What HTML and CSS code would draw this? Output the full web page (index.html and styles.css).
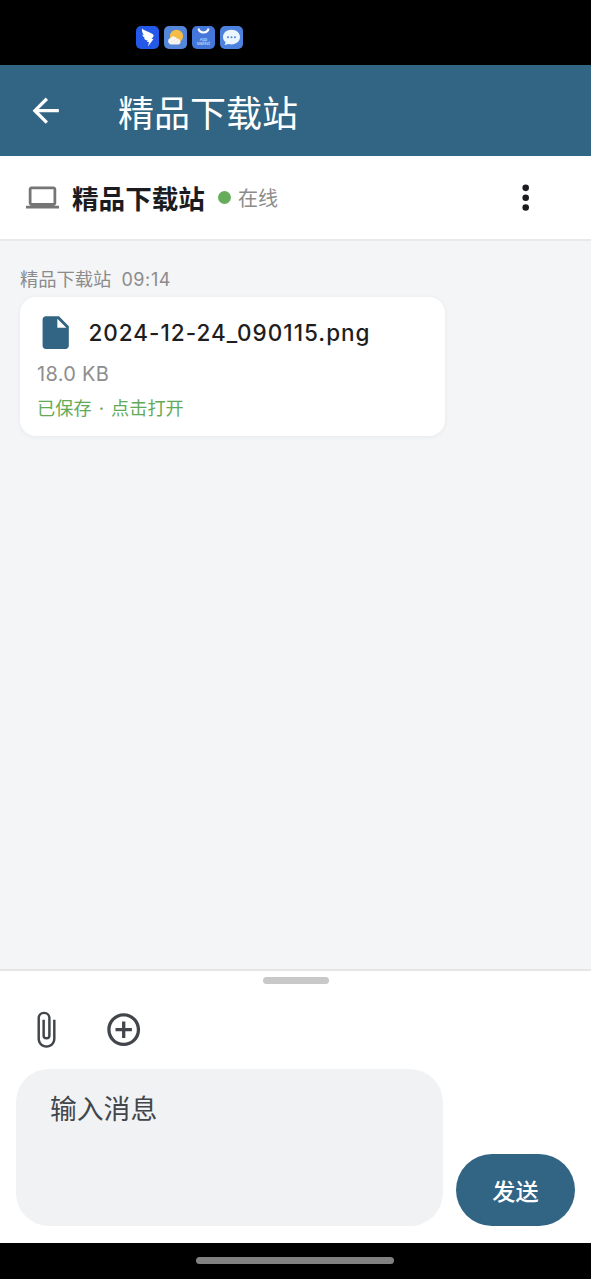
FILE: index.html
```html
<!DOCTYPE html>
<html lang="zh-CN">
<head>
<meta charset="utf-8">
<title>精品下载站</title>
<link rel="stylesheet" href="styles.css">
</head>
<body>
<div class="screen">
  <div class="status">
    <svg class="app" viewBox="0 0 23 23"><rect width="23" height="23" rx="5" fill="#2458e8"/><path d="M6 2.500c2 2 7 3.200 10.500 5.500 1.500 1.100 1.200 2.100.4 3.300l-1.400 1.700h2l-5.500 7.500 1-4.500h-2l.7-1.500c-2-.2-3.200-1-3.800-2.200h1.500C7.500 11.300 6.500 10 6.300 8.500l1.600.5C6.300 7 5.700 5 6 2.500z" fill="#fff"/></svg>
    <svg class="app" viewBox="0 0 23 23"><rect width="23" height="23" rx="5" fill="#5487d9"/><circle cx="12.500" cy="10.200" r="6.500" fill="#f5bd45"/><path d="M6.500 18.500a3.500 3.500 0 0 1-.2-6.600 4 4 0 0 1 6.800.8 3 3 0 0 1 1.400 5.800z" fill="#f5f3eb"/></svg>
    <svg class="app" viewBox="0 0 23 23"><rect width="23" height="23" rx="5" fill="#4577db"/><path d="M6.500 2.500c.8 5.200 9.200 5.200 10 0" fill="none" stroke="#fff" stroke-width="2"/><text class="app-text" x="11.500" y="14.500">App</text><text class="app-text" x="11.500" y="18.900">Market</text></svg>
    <svg class="app" viewBox="0 0 23 23"><rect width="23" height="23" rx="5" fill="#4c82de"/><path d="M11.500 3.800c5 0 8.500 3.100 8.500 7.300s-3.500 7.300-8.500 7.300c-1 0-2-.1-2.900-.4l-4.100 1 1.200-2.700C4 15 3 13.200 3 11.100c0-4.200 3.500-7.300 8.500-7.300z" fill="#eaf5ff"/><g fill="#4c82de"><circle cx="8" cy="11.200" r="1"/><circle cx="11.500" cy="11.200" r="1"/><circle cx="15" cy="11.200" r="1"/></g></svg>
  </div>
  <header class="toolbar">
    <svg class="icon" viewBox="0 0 24 24"><path d="M20 11H7.830l5.590-5.590L12 4l-8 8 8 8 1.410-1.410L7.830 13H20v-2z"/></svg>
    <h1 class="title">精品下载站</h1>
  </header>
  <section class="peer">
    <svg class="laptop" viewBox="0 0 24 24"><path d="M20 18c1.100 0 2-.9 2-2V6c0-1.100-.9-2-2-2H4c-1.100 0-2 .9-2 2v10c0 1.100.9 2 2 2H0v2h24v-2h-4zM4 6h16v10H4V6z"/></svg>
    <span class="peer-name">精品下载站</span>
    <i class="dot"></i>
    <span class="peer-state">在线</span>
    <svg class="icon more" viewBox="0 0 24 24"><circle cx="12" cy="6" r="2"/><circle cx="12" cy="12" r="2"/><circle cx="12" cy="18" r="2"/></svg>
  </section>
  <main class="chat">
    <div class="meta"><span>精品下载站</span><span class="time">09:14</span></div>
    <article class="card">
      <div class="file">
        <svg class="icon" viewBox="0 0 24 24"><path d="M6 2c-1.100 0-1.990.9-1.990 2L4 20c0 1.100.89 2 1.990 2H18c1.100 0 2-.9 2-2V8l-6-6H6zm7 7V3.500L18.500 9H13z"/></svg>
        <span class="file-name">2024-12-24_090115.png</span>
      </div>
      <div class="size">18.0 KB</div>
      <div class="saved">已保存 · 点击打开</div>
    </article>
  </main>
  <section class="composer">
    <div class="handle"></div>
    <div class="tools">
      <svg class="icon" viewBox="0 0 24 24"><path d="M16.500 6v11.500c0 2.210-1.790 4-4 4s-4-1.790-4-4V5a2.500 2.500 0 0 1 5 0v10.500c0 .55-.45 1-1 1s-1-.45-1-1V6H10v9.500a2.500 2.500 0 0 0 5 0V5c0-2.210-1.790-4-4-4S7 2.790 7 5v12.500c0 3.040 2.460 5.500 5.500 5.500s5.500-2.460 5.500-5.500V6h-1.500z"/></svg>
      <svg class="icon" viewBox="0 0 24 24"><path d="M13 7h-2v4H7v2h4v4h2v-4h4v-2h-4V7zm-1-5C6.480 2 2 6.480 2 12s4.480 10 10 10 10-4.480 10-10S17.520 2 12 2zm0 18c-4.410 0-8-3.590-8-8s3.590-8 8-8 8 3.590 8 8-3.590 8-8 8z"/></svg>
    </div>
    <div class="entry">
      <div class="input">输入消息</div>
      <div class="send">发送</div>
    </div>
  </section>
  <div class="nav"><div class="nav-pill"></div></div>
</div>
</body>
</html>
```
FILE: styles.css
```css
* { box-sizing: border-box; }
body { margin: 0; font-family: Inter, "Noto Sans CJK SC", sans-serif; }
.screen { width: 591px; height: 1279px; display: flex; flex-direction: column; overflow: hidden; background: #fff; }
.icon { width: 39.4px; height: 39.4px; flex: none; fill: currentColor; display: block; }

.status { height: 65px; background: #000; display: flex; gap: 5px; padding: 26px 0 0 136px; flex: none; }
.app { width: 23px; height: 23px; }
.app-text { font-size: 4px; fill: #dce9ff; text-anchor: middle; }

.toolbar { height: 91px; flex: none; background: #326484; color: #fff; display: flex; align-items: center; gap: 52.500px; padding-left: 26px; }
.title { margin: 6px 0 0; font-size: 36px; line-height: 48px; font-weight: 400; }

.peer { height: 85px; flex: none; border-bottom: 2px solid #e8e9eb; display: flex; align-items: center; padding: 0 46px 0 26px; color: #1b1c1f; }
.laptop { width: 33px; height: 33px; fill: #757575; margin-right: 13px; }
.peer-name { font-size: 26.600px; line-height: 36px; font-weight: 700; margin-top: 3px; }
.dot { width: 13px; height: 13px; border-radius: 50%; background: #66ad5b; margin: 0 7px 0 13px; }
.peer-state { font-size: 20px; color: #8b8b8b; }
.more { margin-left: auto; }

.chat { flex: 1; background: #f4f5f7; padding: 26px 20px; }
.meta { display: flex; gap: 10px; height: 29px; line-height: 25px; font-size: 18.300px; color: #8b8b8b; }
.time { font-size: 18px; letter-spacing: .6px; }
.card { width: 425px; height: 139px; margin-top: 1px; padding: 16px 17px; background: #fff; border-radius: 16px; box-shadow: 0 1px 5px rgba(40, 50, 70, .06); }
.file { display: flex; align-items: center; gap: 13px; color: #326484; margin-left: -1px; }
.file-name { color: #1e1e20; font-size: 22.500px; font-weight: 450; letter-spacing: 1px; }
.size { color: #8e8e8e; font-size: 20px; line-height: 26px; margin-top: 9px; letter-spacing: .3px; }
.saved { color: #63aa58; font-size: 18.200px; line-height: 26px; margin-top: 8px; word-spacing: 2px; }

.composer { height: 274px; flex: none; border-top: 2px solid #e6e6e6; padding: 6px 16px 0; color: #42464b; }
.handle { width: 66px; height: 7px; border-radius: 4px; background: #c8c8c8; margin: 0 auto; }
.tools { display: flex; gap: 39px; padding: 26px 0 0 10px; height: 85px; }
.entry { display: flex; gap: 13px; align-items: flex-end; }
.input { width: 427px; height: 157px; border-radius: 33px; background: #f1f2f4; padding: 21px 34px; font-size: 26.800px; line-height: 38px; }
.send { width: 119px; height: 72px; border-radius: 36px; background: #326484; color: #fff; display: flex; align-items: center; justify-content: center; font-size: 23.200px; font-weight: 500; }

.nav { height: 36px; flex: none; background: #000; display: flex; justify-content: center; padding-top: 14px; }
.nav-pill { width: 198px; height: 7px; border-radius: 4px; background: #818181; margin-right: 1px; }
```
